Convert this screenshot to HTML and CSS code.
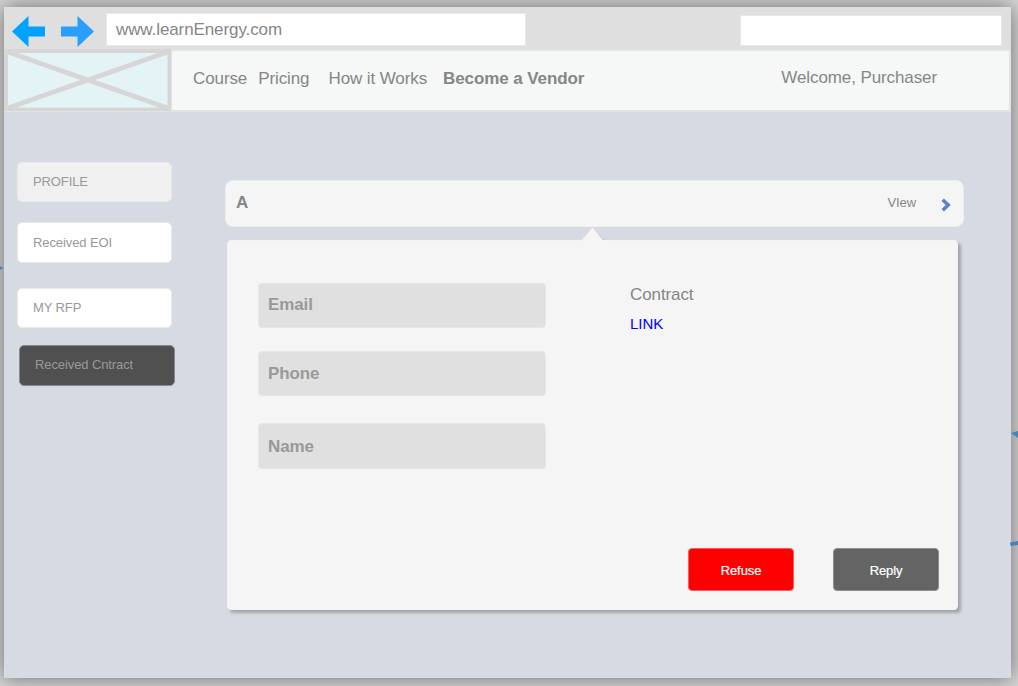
FILE: index.html
```html
<!DOCTYPE html>
<html lang="en">
<head>
<meta charset="utf-8">
<title>learnEnergy</title>
<link rel="stylesheet" href="styles.css">
</head>
<body>
<div class="window">
  <header class="toolbar">
    <svg class="arrow" width="33" height="32" viewBox="0 0 33 32"><path fill="#00a2ff" d="M0 15.500 16.500 0V10.500H33V20.500H16.500V31Z"/></svg>
    <svg class="arrow forward" width="33" height="32" viewBox="0 0 33 32"><path fill="#299ffb" d="M33 15.500 16.500 0V10.500H0V20.500H16.500V31Z"/></svg>
    <div class="address"><span>www.learnEnergy.com</span></div>
    <div class="search"></div>
  </header>
  <div class="masthead">
    <svg class="logo" width="167" height="62" viewBox="0 0 167 62"><path fill="#d6d6d6" d="M0 0h167v62H0z"/><path fill="#e4f3f5" d="M4 4h159.500v54.500H4z"/><path d="M4 3 163.500 59M4 59 163.500 3" stroke="#d6d6d6" stroke-width="5"/></svg>
    <nav class="nav">
      <a class="course">Course</a>
      <a class="pricing">Pricing</a>
      <a class="how">How it Works</a>
      <a class="vendor">Become a Vendor</a>
      <span class="welcome">Welcome, Purchaser</span>
    </nav>
  </div>
  <div class="content">
    <aside class="sidebar">
      <a class="item profile"><span>PROFILE</span></a>
      <a class="item eoi"><span>Received EOI</span></a>
      <a class="item rfp"><span>MY RFP</span></a>
      <a class="item selected"><span>Received Cntract</span></a>
    </aside>
    <main class="main">
      <div class="row">
        <span class="row-title">A</span>
        <span class="view">VIew</span>
        <svg class="chevron" width="10" height="14" viewBox="0 0 10 14"><path d="M1.700 1.700 7.200 7 1.700 12.300" fill="none" stroke="#5b84c4" stroke-width="3.600"/></svg>
      </div>
      <section class="panel">
        <svg class="pointer" width="26" height="15" viewBox="0 0 26 15"><path fill="#c2c7ce" d="M12 2 24 13H5z"/><path fill="#f5f5f5" d="M11.500.5 22 13v2H1v-2z"/></svg>
        <div class="columns">
          <div class="fields">
            <div class="field email"><span>Email</span></div>
            <div class="field phone"><span>Phone</span></div>
            <div class="field name"><span>Name</span></div>
          </div>
          <div class="contract">
            <div class="contract-title"><span>Contract</span></div>
            <a class="link">LINK</a>
          </div>
        </div>
        <div class="actions">
          <div class="button refuse"><span>Refuse</span></div>
          <div class="button reply"><span>Reply</span></div>
        </div>
      </section>
    </main>
  </div>
</div>
<svg class="connectors" width="1018" height="686" viewBox="0 0 1018 686"><path fill="#4484b8" d="M0 266 3.300 268.200 0 270zM1011 433 1018 431V438zM1010 542.500 1018 541V545L1010.500 546z"/></svg>
</body>
</html>
```
FILE: styles.css
```css
* { box-sizing: border-box; }
body {
  margin: 0;
  width: 1018px;
  height: 686px;
  padding: 7px 7px 8px 4px;
  overflow: hidden;
  background: #d6d6d6;
  font-family: "Liberation Sans", Arial, sans-serif;
  font-size: 17px;
  line-height: 20px;
  letter-spacing: -.1px;
  color: #868686;
}
span, a { white-space: nowrap; }
svg { display: block; flex: none; }
.window {
  height: 100%;
  display: flex;
  flex-direction: column;
  background: #d6dae2;
  box-shadow: 0 0 20px rgba(0, 0, 0, .5);
}
.toolbar {
  height: 42px;
  flex: none;
  display: flex;
  align-items: flex-start;
  padding: 6px 9px 0 8px;
  background: #dfdfdf;
}
.arrow { margin-top: 3px; }
.forward { margin-left: 16px; }
.address {
  width: 420px;
  height: 33px;
  margin-left: 12px;
  padding: 6px 0 0 9px;
  background: #fff;
  border: 1px solid #e8e8e8;
}
.search {
  width: 262px;
  height: 31px;
  margin: 2px 0 0 auto;
  background: #fff;
  border: 1px solid #e8e8e8;
}
.masthead {
  height: 63px;
  flex: none;
  display: flex;
  background: #e3e3e3;
}
.nav {
  flex: 1;
  height: 63px;
  display: flex;
  padding: 18px 0 0 21px;
  background: #f5f8f7;
  border: 2px solid #e3e3e3;
  border-left-width: 1px;
}
.pricing { margin-left: 11px; }
.how { margin-left: 19px; }
.vendor { margin-left: 16px; font-weight: bold; }
.welcome { margin: -1px 72px 0 auto; }
.content { flex: 1; display: flex; }
.sidebar { width: 221px; padding: 50px 0 0 13px; }
.item {
  display: block;
  width: 155px;
  height: 40px;
  padding: 9px 15px;
  background: #fff;
  border: 1px solid #e7e9ec;
  border-radius: 5px;
  color: #999;
  font-size: 13px;
}
.profile { background: #f0f0f0; }
.eoi { margin-top: 20px; height: 41px; padding-top: 10px; }
.rfp { margin-top: 25px; }
.selected {
  margin: 17px 0 0 2px;
  width: 156px;
  height: 41px;
  background: #505050;
  border-color: #85888d;
}
.row {
  width: 739px;
  height: 47px;
  margin-top: 68px;
  padding: 12px 12px 0 10px;
  display: flex;
  background: #f5f5f5;
  border: 1px solid #eceef0;
  border-radius: 8px;
}
.row-title { font-weight: bold; }
.view { margin-left: auto; font-size: 13px; }
.chevron { margin: 5px 0 0 25px; }
.panel {
  position: relative;
  width: 731px;
  height: 370px;
  margin: 13px 0 0 2px;
  padding: 42px 18px 18px 30px;
  display: flex;
  flex-direction: column;
  justify-content: space-between;
  background: #f5f5f5;
  border: 1px solid #f2f2f3;
  border-radius: 4px;
  box-shadow: 3px 3px 3px rgba(0, 0, 0, .24);
}
.pointer { position: absolute; left: 353px; top: -14px; }
.columns { display: flex; }
.fields { width: 288px; }
.field {
  height: 45px;
  padding: 11px 9px;
  background: #e0e0e0;
  border: 1px solid #e7e7e7;
  border-radius: 4px;
  font-weight: bold;
  color: #999;
}
.phone { margin-top: 23px; padding-top: 12px; }
.name { margin-top: 27px; height: 46px; padding-top: 13px; }
.contract { margin-left: 84px; padding-top: 2px; }
.link {
  display: block;
  margin-top: 9px;
  font-size: 15px;
  letter-spacing: 0;
  color: #00f;
}
.actions { display: flex; justify-content: flex-end; gap: 39px; }
.button {
  width: 106px;
  height: 43px;
  padding-top: 12px;
  text-align: center;
  font-size: 13px;
  color: #fff;
  border-radius: 4px;
  -webkit-text-stroke: .2px #fff;
}
.refuse { background: #f00; border: 1px solid #fa5c5c; }
.reply { background: #646465; border: 1px solid #8f8f90; }
.connectors { position: absolute; left: 0; top: 0; pointer-events: none; }
```
